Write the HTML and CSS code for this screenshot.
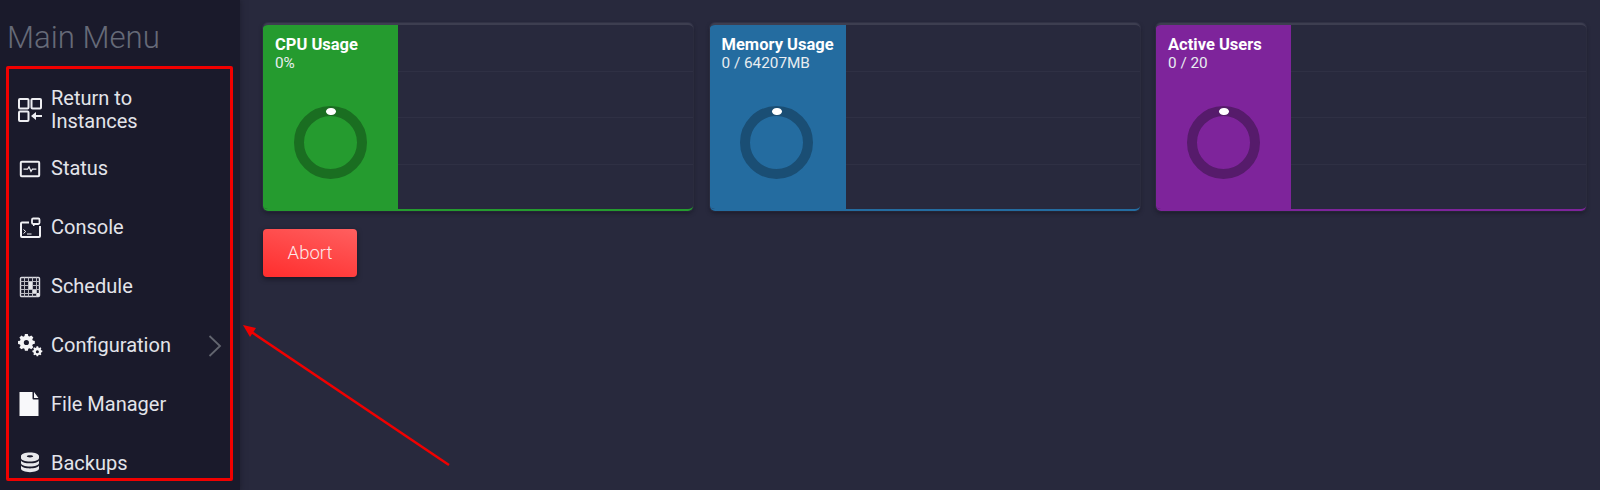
FILE: index.html
```html
<!DOCTYPE html>
<html lang="en">
<head>
<meta charset="utf-8">
<title>Main Menu</title>
<link rel="stylesheet" href="styles.css">
</head>
<body>
<div class="app">
  <aside class="sidebar">
    <h1 class="menu-title">Main Menu</h1>
    <nav class="nav">
      <a class="nav-item">
        <svg class="icon" viewBox="0 0 24 24" fill="none" stroke="#eeeef2" stroke-width="2"><rect x="1" y="1" width="9.500" height="9.500" rx="1"/><rect x="13.500" y="1" width="9.500" height="9.500" rx="1"/><rect x="1" y="13.500" width="9.500" height="9.500" rx="1"/><path d="M16 18h8" stroke-width="2"/><path d="M13 18l5-4v8z" fill="#eeeef2" stroke="none"/></svg>
        <span class="nav-label">Return to Instances</span>
      </a>
      <a class="nav-item">
        <svg class="icon" viewBox="0 0 24 24" fill="none" stroke="#f0f0f4"><rect x="2.800" y="4.800" width="18.400" height="14.400" rx="1" stroke-width="2"/><path d="M5.500 12.200h4l1.500-2.400 2 4.600 1.400-2.200h4" stroke-width="1.200"/></svg>
        <span class="nav-label">Status</span>
      </a>
      <a class="nav-item">
        <svg class="icon" viewBox="0 0 24 24" fill="none" stroke="#f0f0f4" stroke-width="2"><path d="M11 6.500H4a1 1 0 0 0-1 1V20a1 1 0 0 0 1 1h17a1 1 0 0 0 1-1V10"/><rect x="14" y="2.500" width="7.500" height="5.500" rx="1.200" stroke-width="1.800"/><path d="M15.500 8v2l2-2" stroke-width="1"/><path d="M5.500 13.500l2.200 2-2.200 2M9 18h4.500" stroke-width="1"/></svg>
        <span class="nav-label">Console</span>
      </a>
      <a class="nav-item">
        <svg class="icon" viewBox="0 0 24 24" fill="none" stroke="#b9b9c0" stroke-width="1"><rect x="2.500" y="2.500" width="19" height="19" rx="1" stroke="#dcdce2" stroke-width="1.400"/><path d="M2.500 6.500h19M2.500 10.500h19M2.500 14.500h19M2.500 18.500h19M6.500 2.500v19M10.500 2.500v19M14.500 2.500v19M18.500 2.500v19"/><path d="M11 7h3v7h-3zM15 15h3v3h-3zM19 18h2v3h-2z" fill="#e6e6ea" stroke="none"/></svg>
        <span class="nav-label">Schedule</span>
      </a>
      <a class="nav-item">
        <svg class="icon" viewBox="0 0 24 24" fill="#f4f4f6"><path fill-rule="evenodd" d="M7 2h3.400l.5 2.300 1.500.7 2-1.300 2.400 2.400-1.300 2 .7 1.500 2.300.5v3.400l-2.300.5-.7 1.500 1.300 2-2.400 2.400-2-1.300-1.500.7-.5 2.300H7l-.5-2.300-1.500-.7-2 1.300L.6 17.700l1.300-2-.6-1.500L-1 13.700v-3.400l2.300-.5.600-1.500-1.300-2L3 3.900l2 1.300 1.500-.7zM8.700 9a3 3 0 1 0 0 6 3 3 0 0 0 0-6z" transform="translate(.9 -1.800) scale(.86)"/><path fill-rule="evenodd" d="M18.600 14.500h1.800l.3 1.300 1 .4 1.100-.7 1.200 1.200-.7 1.100.4 1 1.300.3v1.800l-1.300.3-.4 1 .7 1.100-1.200 1.200-1.100-.7-1 .4-.3 1.300h-1.800l-.3-1.300-1-.4-1.100.7-1.200-1.200.7-1.100-.4-1-1.300-.3v-1.800l1.300-.3.4-1-.7-1.100 1.200-1.200 1.100.7 1-.4zm.9 4.300a1.700 1.700 0 1 0 0 3.400 1.700 1.700 0 0 0 0-3.400z" transform="translate(1.800 -.7) scale(.9)"/></svg>
        <span class="nav-label">Configuration</span>
        <svg class="chevron" viewBox="0 0 14 24" fill="none" stroke="#62656f" stroke-width="1.800"><path d="M1.500 2l10.500 10L1.500 22"/></svg>
      </a>
      <a class="nav-item">
        <svg class="icon" viewBox="0 0 24 24" fill="#f8f8fa"><path d="M1.500 0h13v6.500a1 1 0 0 0 1 1H20.500V24h-19zM16 0l4.500 6H16z"/></svg>
        <span class="nav-label">File Manager</span>
      </a>
      <a class="nav-item">
        <svg class="icon" viewBox="0 0 24 24" fill="#e8e8ec"><path fill-rule="evenodd" d="M12 1.500c5 0 9 1.600 9 3.600v1.800c0 2-4 3.600-9 3.600s-9-1.600-9-3.600V5.100c0-2 4-3.600 9-3.600zm0 2.700c-1.800 0-3.200.5-3.200 1.100s1.400 1.100 3.200 1.100 3.200-.5 3.200-1.100-1.400-1.100-3.200-1.100z"/><path d="M3 9.400c1 1.900 4.700 2.900 9 2.900s8-1 9-2.900v2.500c0 2-4 3.600-9 3.600s-9-1.600-9-3.600z"/><path d="M3 14.600c1 1.900 4.700 2.900 9 2.900s8-1 9-2.900v3c0 2-4 3.600-9 3.600s-9-1.600-9-3.600z"/></svg>
        <span class="nav-label">Backups</span>
      </a>
    </nav>
  </aside>

  <main class="content">
    <section class="cards">
      <article class="card card-green">
        <div class="panel">
          <div class="panel-title">CPU Usage</div>
          <div class="panel-value">0%</div>
          <div class="ring"><span class="ring-dot"></span></div>
        </div>
        <div class="chart"><i></i><i></i><i></i><i></i></div>
      </article>
      <article class="card card-blue">
        <div class="panel">
          <div class="panel-title">Memory Usage</div>
          <div class="panel-value">0 / 64207MB</div>
          <div class="ring"><span class="ring-dot"></span></div>
        </div>
        <div class="chart"><i></i><i></i><i></i><i></i></div>
      </article>
      <article class="card card-purple">
        <div class="panel">
          <div class="panel-title">Active Users</div>
          <div class="panel-value">0 / 20</div>
          <div class="ring"><span class="ring-dot"></span></div>
        </div>
        <div class="chart"><i></i><i></i><i></i><i></i></div>
      </article>
    </section>
    <button class="abort" type="button">Abort</button>
  </main>
</div>

<div class="callout-box"></div>
<svg class="callout-arrow" viewBox="0 0 1600 490" fill="none">
  <path d="M449 465L250 331" stroke="#f00000" stroke-width="2.500"/>
  <path d="M243 325l13 3-6 9z" fill="#f00000"/>
</svg>
</body>
</html>
```

FILE: styles.css
```css
* {
  box-sizing: border-box;
}

html,
body {
  margin: 0;
  height: 490px;
  overflow: hidden;
  background: #28293d;
  font-family: Roboto, "Liberation Sans", sans-serif;
}

.app {
  display: flex;
  height: 490px;
  overflow: hidden;
}

.sidebar {
  flex: 0 0 240px;
  height: 490px;
  overflow: hidden;
  background: #1a1a2b;
  box-shadow: 0 0 6px rgba(20, 20, 32, 0.6);
  padding-top: 20px;
}

.menu-title {
  margin: 0;
  padding-left: 7px;
  height: 42px;
  font-size: 31.200px;
  line-height: 36px;
  font-weight: 300;
  color: #666a78;
}

.nav {
  display: flex;
  flex-direction: column;
  margin-top: 18.500px;
}

.nav-item {
  flex: 0 0 58.900px;
  display: flex;
  align-items: center;
  gap: 9px;
  padding-left: 18px;
  color: #e3e4ea;
  font-size: 20px;
  line-height: 23px;
}

.icon {
  flex: 0 0 24px;
  width: 24px;
  height: 24px;
  overflow: visible;
}

.nav-label {
  flex: 0 1 130px;
  white-space: normal;
}

.nav-item:not(:first-child) .nav-label {
  white-space: nowrap;
}

.chevron {
  width: 14px;
  height: 26px;
  margin-left: 18px;
}

.content {
  flex: 1;
  min-width: 0;
  padding: 23px 15px 0 23px;
}

.cards {
  display: grid;
  grid-template-columns: repeat(3, 430px);
  column-gap: 16.500px;
}

.card {
  display: flex;
  height: 188px;
  border-radius: 5px;
  overflow: hidden;
  border-top: 2px solid #3d3e50;
  border-bottom: 2px solid var(--accent);
  box-shadow: 0 2px 4px rgba(15, 15, 25, 0.55), 0 0 0 1px #34354a;
  background: #28293d;
}

.card-green {
  --accent: #259b2f;
  --ring: #1a6e21;
}

.card-blue {
  --accent: #246ca0;
  --ring: #1a4e74;
}

.card-purple {
  --accent: #7e249b;
  --ring: #561b6b;
}

.panel {
  position: relative;
  flex: 0 0 135px;
  margin: -2px 0 -2px 0;
  padding: 11px 12px 0;
  background: var(--accent);
  color: #fff;
}

.panel-title {
  font-size: 16.500px;
  line-height: 21px;
  font-weight: 700;
  white-space: nowrap;
}

.panel-value {
  font-size: 15.300px;
  line-height: 17px;
  font-weight: 400;
  color: #e8edf0;
  white-space: nowrap;
}

.ring {
  position: relative;
  width: 73px;
  height: 73px;
  margin: 34px 0 0 18.500px;
  border: 10.500px solid var(--ring);
  border-radius: 50%;
}

.ring-dot {
  position: absolute;
  left: 22px;
  top: -8.500px;
  width: 10px;
  height: 7.500px;
  border-radius: 50%;
  background: #fff;
}

.chart {
  flex: 1;
  display: flex;
  flex-direction: column;
}

.chart i {
  display: block;
  flex: 0 0 46.500px;
  border-bottom: 1px solid #2f3044;
}

.chart i:last-child {
  border-bottom: 0;
}

.abort {
  display: block;
  width: 94px;
  height: 48px;
  margin-top: 18px;
  border: 0;
  border-radius: 4px;
  background: linear-gradient(15deg, #ff2d2d, #ff5f5f);
  box-shadow: 0 2px 5px rgba(10, 10, 20, 0.6);
  color: #fde8ea;
  font-family: inherit;
  font-size: 18.500px;
  font-weight: 300;
}

.callout-box {
  position: absolute;
  left: 6px;
  top: 66px;
  width: 227px;
  height: 415px;
  border: 3px solid #f00000;
  border-radius: 2px;
}

.callout-arrow {
  position: absolute;
  left: 0;
  top: 0;
  width: 1600px;
  height: 490px;
}
```
